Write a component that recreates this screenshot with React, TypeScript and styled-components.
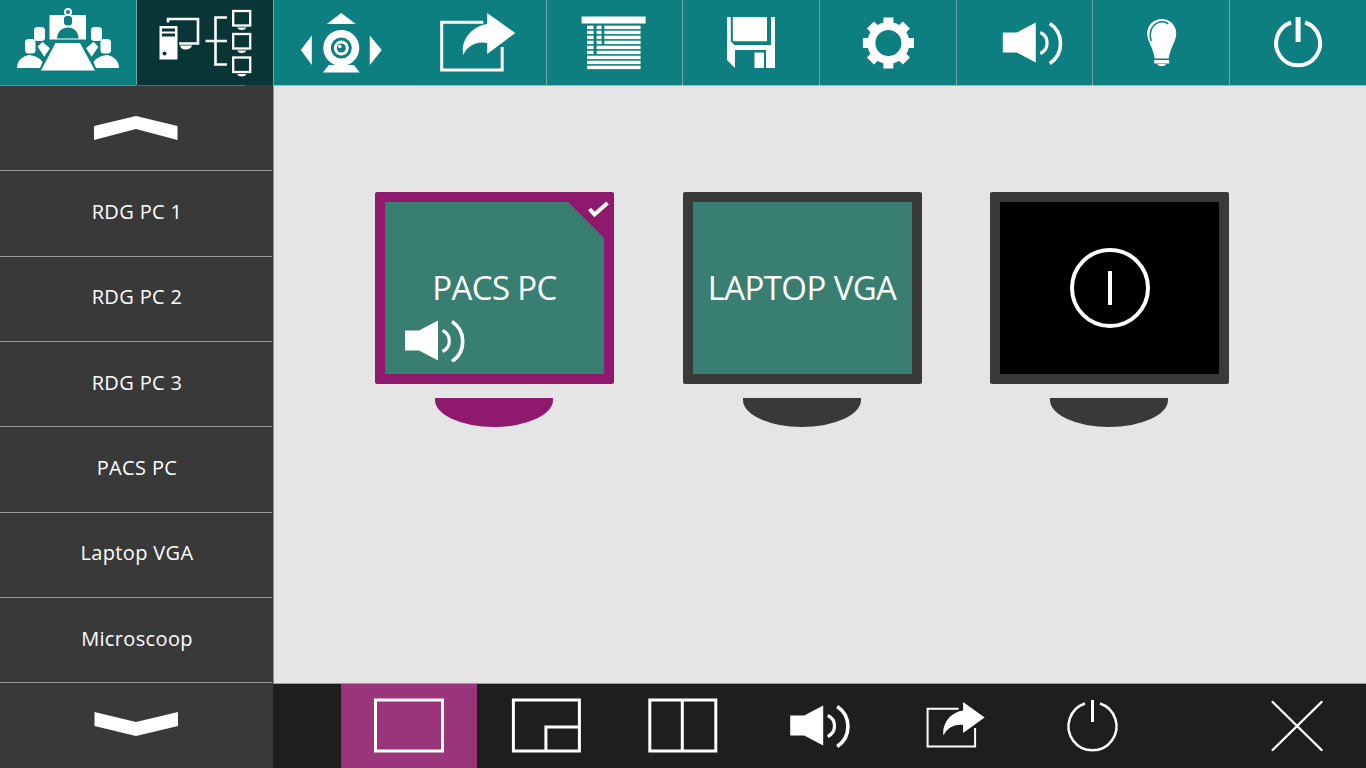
import React from "react";
import styled, { createGlobalStyle } from "styled-components";

const Global = createGlobalStyle`
  html, body { margin: 0; padding: 0; width: 100%; height: 100%; overflow: hidden; background: #e5e5e5; }
  * { box-sizing: border-box; }
  #root { width: 100%; height: 100%; }
`;

const Page = styled.div`
  width: 1366px;
  height: 768px;
  display: grid;
  grid-template-rows: 85px 1fr;
  font-family: "Open Sans", "Noto Sans", sans-serif;
  color: #fff;
`;

const TopBar = styled.nav`
  position: relative;
  display: grid;
  grid-template-columns: repeat(10, 1fr);
  background: #0d7f80;
`;

const TopCell = styled.div<{ $active?: boolean; $plain?: boolean; $line: string; $lineWidth: string }>`
  position: relative;
  min-width: 0;
  margin-right: -0.4px;
  background: ${(p) => (p.$active ? "#0a3536" : "transparent")};
  border-right: ${(p) => (p.$plain ? "none" : "1px solid #6aacac")};

  &::after {
    content: "";
    position: absolute;
    left: 0;
    top: 100%;
    height: 1px;
    width: ${(p) => p.$lineWidth};
    background: ${(p) => p.$line};
  }
`;

const Glyph = styled.svg`
  display: block;
  overflow: hidden;
  flex: none;
`;

const Body = styled.div`
  display: flex;
  min-height: 0;
`;

const Sidebar = styled.aside`
  width: 273px;
  flex: none;
  display: grid;
  grid-template-rows: repeat(8, 85.33px);
  background: #393939;
`;

const SideRow = styled.div<{ $first?: boolean }>`
  display: flex;
  align-items: center;
  justify-content: center;
  font-size: 20px;
  letter-spacing: 0.35px;
  margin-right: 1px;
  border-top: ${(p) => (p.$first ? "none" : "1px solid #9a9a9a")};
`;

const SideLabel = styled.span`
  position: relative;
  top: -2px;
  left: 1px;
`;

const Column = styled.div`
  flex: 1;
  min-width: 0;
  display: grid;
  grid-template-rows: 1fr 85px;
`;

const Stage = styled.main`
  background: #e5e5e5;
  border-left: 1px solid #8f8f8f;
  display: flex;
  align-items: flex-start;
  gap: 68.5px;
  padding: 107px 0 0 101px;
`;

const Monitor = styled.div`
  width: 239px;
  display: flex;
  flex-direction: column;
  align-items: center;
  gap: 14px;
`;

const Frame = styled.div<{ $selected?: boolean }>`
  width: 239px;
  height: 192px;
  padding: 10px;
  border-radius: 2px;
  background: ${(p) => (p.$selected ? "#8f1a6d" : "#393939")};
`;

const Screen = styled.div<{ $off?: boolean }>`
  position: relative;
  width: 100%;
  height: 100%;
  display: flex;
  align-items: center;
  justify-content: center;
  background: ${(p) => (p.$off ? "#000" : "#387f72")};
`;

const ScreenLabel = styled.span`
  position: relative;
  top: -1px;
  font-size: 33px;
  letter-spacing: -0.6px;
`;

const CornerCut = styled.span`
  position: absolute;
  top: 0;
  right: 0;
  width: 36px;
  height: 36px;
  background: #8f1a6d;
  clip-path: polygon(0 0, 100% 0, 100% 100%);
`;

const CheckMark = styled.svg`
  position: absolute;
  top: -4px;
  right: -8px;
`;

const AudioBadge = styled.svg`
  position: absolute;
  left: 20px;
  bottom: 12px;
`;

const Stand = styled.div<{ $selected?: boolean }>`
  width: 118px;
  height: 29px;
  margin-right: 1px;
  background: ${(p) => (p.$selected ? "#8f1a6d" : "#393939")};
  border-radius: 0 0 59px 59px / 0 0 27px 27px;
`;

const BottomBar = styled.div`
  display: flex;
  padding-left: 68px;
  background: #1e1e1e;
  border-top: 1px solid #9a9a9a;
`;

const BottomCell = styled.div<{ $active?: boolean; $end?: boolean }>`
  width: ${(p) => (p.$active ? "136px" : "136.6px")};
  flex: none;
  margin-right: ${(p) => (p.$active ? "0.6px" : "0")};
  margin-left: ${(p) => (p.$end ? "auto" : "0")};
  background: ${(p) => (p.$active ? "#9a357b" : "transparent")};
`;

const W = "#fff";
const TEAL = "#0d7f80";
const DARK = "#0a3536";

/* Speaker in local coordinates, 59 x 41 */
const Speaker = ({ x, y }: { x: number; y: number }) => (
  <g transform={`translate(${x} ${y})`}>
    <path d="M0 10H14L33 0V40L14 30H0Z" fill={W} />
    <path d="M37.5 10A11.5 11.5 0 0 1 37.5 31" fill="none" stroke={W} strokeWidth={3.2} />
    <path d="M47 1A24 24 0 0 1 47 41" fill="none" stroke={W} strokeWidth={3.6} />
  </g>
);

const ConferencePerson = () => (
  <>
    <rect x={34} y={27} width={11} height={14} rx={3.5} fill={W} />
    <path d="M37.7 46.7L42.3 41.7L50 48.3L44.3 56.7Z" fill={W} />
    <rect x={25} y={39} width={10.5} height={14.5} rx={3.5} fill={W} />
    <path d="M17 68C17 61 22 56 29.5 55C36 56 41 59 42.5 62L40 68Z" fill={W} />
  </>
);

const IconConference = () => (
  <Glyph width="136.6" height="85" viewBox="0 0 136.6 85">
    <circle cx={68} cy={12} r={3} fill="none" stroke={W} strokeWidth={2} />
    <rect x={49.5} y={15} width={36.5} height={24.5} fill={W} />
    <rect x={64} y={16} width={8} height={9.5} rx={3} fill={TEAL} />
    <path d="M57 38.5C57 32 62 27.5 68 27.5C74 27.5 78.5 32 78.5 38.5Z" fill={TEAL} />
    <path d="M41 70.5H95L80 43H55.5Z" fill={W} />
    <ConferencePerson />
    <g transform="matrix(-1 0 0 1 136 0)">
      <ConferencePerson />
    </g>
  </Glyph>
);

const SmallScreen = ({ y }: { y: number }) => (
  <>
    <rect x={83.7} y={y + 1} width={17} height={14.5} fill="none" stroke={W} strokeWidth={2.3} />
    <path d={`M87.5 ${y + 17.5}H97Q95.5 ${y + 20} 92.2 ${y + 20}Q89 ${y + 20} 87.5 ${y + 17.5}Z`} fill={W} />
  </>
);

const IconNetwork = () => (
  <Glyph width="136.6" height="85" viewBox="136.6 0 136.6 85">
    <g transform="translate(136.6 0)">
      <path d="M31 22.5V19H61V43.5H42" fill="none" stroke={W} strokeWidth={2.6} />
      <path d="M43 45.5H55Q54 49.5 48 49.5Q44 49.5 43 45.5Z" fill={W} />
      <path d="M22.5 26H40.5V59.5H22.5Z" fill={W} />
      <rect x={25} y={28.5} width={13} height={3} fill={DARK} />
      <rect x={25} y={33.5} width={13} height={3} fill={DARK} />
      <circle cx={27.5} cy={53.5} r={2} fill={DARK} />
      <path d="M68.5 41H90M78.5 65V17.5H90M77 64.5H90" fill="none" stroke={W} strokeWidth={2.6} />
      <g transform="translate(12.5 0)">
        <SmallScreen y={10} />
        <SmallScreen y={33} />
        <SmallScreen y={56.5} />
      </g>
    </g>
  </Glyph>
);

const IconCamera = () => (
  <Glyph width="136.6" height="85" viewBox="273.2 0 136.6 85">
    <path d="M327 24H356L341.5 13ZM312 35.5V65L301 50ZM370 35.5V65L382 50Z" fill={W} />
    <path d="M323 72.5L329 65H354L360 72.5Z" fill={W} />
    <circle cx={341.5} cy={48} r={18} fill={W} />
    <circle cx={341.5} cy={48} r={10.5} fill={TEAL} />
    <circle cx={341.5} cy={48} r={7.5} fill={W} />
    <circle cx={341.5} cy={48} r={4.5} fill={TEAL} />
    <circle cx={340} cy={46.5} r={1.8} fill={W} />
  </Glyph>
);

const IconShare = () => (
  <Glyph width="136.6" height="85" viewBox="409.8 0 136.6 85">
    <path d="M483 22.2H441.5V70H502V47" fill="none" stroke={W} strokeWidth={3} />
    <path d="M487 13L515 33L487 54V43C478 41 468 44 463 55C460 40 472 26 487 24Z" fill={W} />
  </Glyph>
);

const IconBlinds = () => (
  <Glyph width="136.6" height="85" viewBox="546.4 0 136.6 85">
    <rect x={582} y={16.5} width={64} height={7} fill={W} />
    {[0, 1, 2, 3, 4, 5, 6, 7, 8].map((i) => (
      <rect key={i} x={587.5} y={25.7 + i * 5} width={53.5} height={3.4} fill={W} />
    ))}
    <rect x={594} y={25} width={3} height={30} fill={TEAL} />
    <rect x={602} y={25} width={2.7} height={20} fill={TEAL} />
  </Glyph>
);

const IconSave = () => (
  <Glyph width="136.6" height="85" viewBox="683 0 136.6 85">
    <path d="M727 17H730.8V41.5L734.5 45H771V17H775V68H766V50H735V68L727 60Z" fill={W} />
    <rect x={754.5} y={52.5} width={9.5} height={15.5} fill={W} />
    <path d="M732.8 17H767V41.3H732.8Z" fill={W} />
  </Glyph>
);

const IconGear = () => (
  <Glyph width="136.6" height="85" viewBox="819.6 0 136.6 85">
    <circle cx={888} cy={43} r={17} fill="none" stroke={W} strokeWidth={8} />
    {[0, 45, 90, 135, 180, 225, 270, 315].map((a) => (
      <rect key={a} x={883} y={17.5} width={10} height={8} fill={W} transform={`rotate(${a} 888 43)`} />
    ))}
  </Glyph>
);

const IconVolume = () => (
  <Glyph width="136.6" height="85" viewBox="956.2 0 136.6 85">
    <Speaker x={1003} y={22.5} />
  </Glyph>
);

const IconBulb = () => (
  <Glyph width="136.6" height="85" viewBox="1092.8 0 136.6 85">
    <path
      d="M1161.5 19C1170 19 1176 25.5 1176 33.5C1176 42 1170 47 1168.5 58.5H1154.5C1153 47 1147 42 1147 33.5C1147 25.5 1153 19 1161.5 19Z"
      fill={W}
    />
    <path
      d="M1151 41C1147.5 30 1154 21.5 1163 21.7C1165 21.9 1167 22.8 1168 24"
      fill="none"
      stroke={TEAL}
      strokeWidth={1.6}
    />
    <rect x={1154} y={60} width={15} height={3.5} fill={W} />
    <path d="M1157 64H1166Q1165 66.3 1161.5 66.3Q1158 66.3 1157 64Z" fill={W} />
  </Glyph>
);

const IconPower = () => (
  <Glyph width="136.6" height="85" viewBox="1229.4 0 136.6 85">
    <path d="M1291.5 22.5A22 22 0 1 0 1305.5 22.5" fill="none" stroke={W} strokeWidth={4} />
    <rect x={1296} y={17} width={5} height={25} fill={W} />
  </Glyph>
);

const top = [
  { key: "conf", Icon: IconConference, line: "#5f9494", lineWidth: "100%" },
  { key: "net", Icon: IconNetwork, active: true, line: "#4f6f6f", lineWidth: "80%" },
  { key: "cam", Icon: IconCamera, plain: true, line: "#9cc6c6", lineWidth: "100%" },
  { key: "share", Icon: IconShare, line: "#8fbcbc", lineWidth: "100%" },
  { key: "blinds", Icon: IconBlinds, line: "#8fbcbc", lineWidth: "100%" },
  { key: "save", Icon: IconSave, line: "#8fbcbc", lineWidth: "100%" },
  { key: "gear", Icon: IconGear, line: "#8fbcbc", lineWidth: "100%" },
  { key: "vol", Icon: IconVolume, line: "#8fbcbc", lineWidth: "100%" },
  { key: "bulb", Icon: IconBulb, line: "#8fbcbc", lineWidth: "100%" },
  { key: "power", Icon: IconPower, plain: true, line: "#8fbcbc", lineWidth: "100%" },
];

const sources = ["RDG PC 1", "RDG PC 2", "RDG PC 3", "PACS PC", "Laptop VGA", "Microscoop"];

const bottomBox = (x: number) => `${x} 684 136.6 84`;

const BottomIcons = [
  {
    key: "single",
    x: 341,
    art: <rect x={375.5} y={700} width={67} height={51} fill="none" stroke={W} strokeWidth={3} />,
  },
  {
    key: "pip",
    x: 477.6,
    art: <path d="M513 700H579V751H513ZM545.5 751V727H579" fill="none" stroke={W} strokeWidth={3} />,
  },
  {
    key: "split",
    x: 614.2,
    art: <path d="M650 700H716V751H650ZM682.5 700V751" fill="none" stroke={W} strokeWidth={3} />,
  },
  { key: "volume", x: 750.8, art: <Speaker x={790} y={705.5} /> },
  {
    key: "send",
    x: 887.4,
    art: (
      <>
        <path d="M959 708.8H928V746.5H975.5V728" fill="none" stroke={W} strokeWidth={2} />
        <path d="M963.5 702L985 717.5L963.5 733V725C956 724 948 727 944 735.5C942 724 951 712 963.5 710.5Z" fill={W} />
      </>
    ),
  },
  {
    key: "off",
    x: 1024,
    art: (
      <>
        <path d="M1085 703.5A24 24 0 1 0 1100 703.5" fill="none" stroke={W} strokeWidth={2.5} />
        <rect x={1091} y={700} width={3} height={22} fill={W} />
      </>
    ),
  },
];

export default function App() {
  return (
    <Page>
      <Global />
      <TopBar>
        {top.map(({ key, Icon, active, plain, line, lineWidth }) => (
          <TopCell key={key} $active={active} $plain={plain} $line={line} $lineWidth={lineWidth}>
            <Icon />
          </TopCell>
        ))}
      </TopBar>
      <Body>
        <Sidebar>
          <SideRow $first>
            <svg width="272" height="85" viewBox="0 85 272 85">
              <path d="M94 126L136 116L177.5 126V140L136 129L94 140Z" fill={W} />
            </svg>
          </SideRow>
          {sources.map((s) => (
            <SideRow key={s}>
              <SideLabel>{s}</SideLabel>
            </SideRow>
          ))}
          <SideRow>
            <svg width="272" height="84" viewBox="0 684 272 84">
              <path d="M94.5 713L136 723L178 713V727L136 737L94.5 727Z" fill={W} />
            </svg>
          </SideRow>
        </Sidebar>
        <Column>
          <Stage>
            <Monitor>
              <Frame $selected>
                <Screen>
                  <ScreenLabel>PACS PC</ScreenLabel>
                  <CornerCut />
                  <CheckMark width="30" height="24" viewBox="0 0 30 24">
                    <path d="M7.5 11L12.5 16.5L25.5 5" fill="none" stroke={W} strokeWidth={4} />
                  </CheckMark>
                  <AudioBadge width="60" height="42" viewBox="0 0 60 42">
                    <Speaker x={0} y={0.5} />
                  </AudioBadge>
                </Screen>
              </Frame>
              <Stand $selected />
            </Monitor>
            <Monitor>
              <Frame>
                <Screen>
                  <ScreenLabel>LAPTOP VGA</ScreenLabel>
                </Screen>
              </Frame>
              <Stand />
            </Monitor>
            <Monitor>
              <Frame>
                <Screen $off>
                  <svg width="85" height="84" viewBox="0 0 85 84">
                    <circle cx={43} cy={42} r={38} fill="none" stroke={W} strokeWidth={4} />
                    <rect x={41} y={25} width={4} height={34} fill={W} />
                  </svg>
                </Screen>
              </Frame>
              <Stand />
            </Monitor>
          </Stage>
          <BottomBar>
            {BottomIcons.map((b, i) => (
              <BottomCell key={b.key} $active={i === 0}>
                <Glyph width="136.6" height="84" viewBox={bottomBox(b.x)}>
                  {b.art}
                </Glyph>
              </BottomCell>
            ))}
            <BottomCell $end>
              <Glyph width="136.6" height="84" viewBox={bottomBox(1229.4)}>
                <path d="M1273 702L1322 750M1322 702L1273 750" fill="none" stroke={W} strokeWidth={2.4} strokeLinecap="round" />
              </Glyph>
            </BottomCell>
          </BottomBar>
        </Column>
      </Body>
    </Page>
  );
}
